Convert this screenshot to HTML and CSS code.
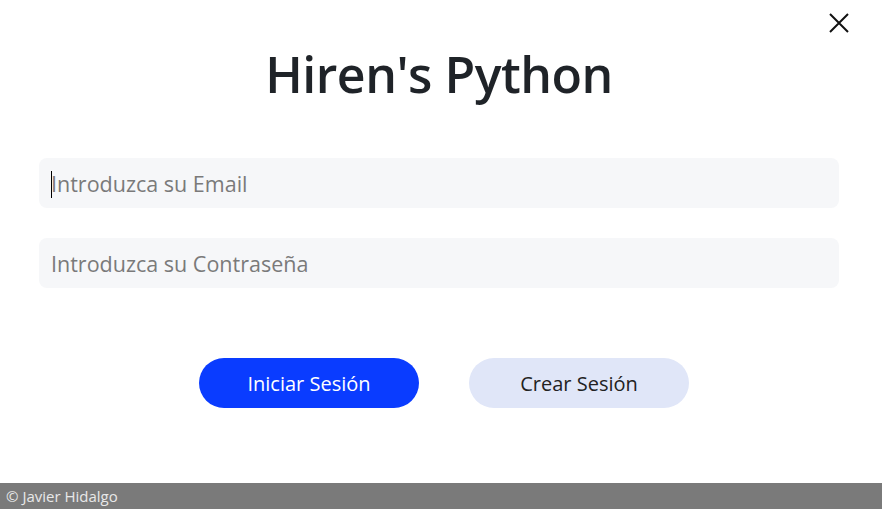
FILE: index.html
```html
<!DOCTYPE html>
<html lang="es">
<head>
<meta charset="utf-8">
<title>Hiren's Python</title>
<link rel="stylesheet" href="styles.css">
</head>
<body>
<div class="app">
  <main class="main">
    <button class="close" aria-label="Cerrar">
      <svg width="20" height="20" viewBox="0 0 20 20"><path d="M1 1 L19 19 M19 1 L1 19" stroke="#111" stroke-width="2" fill="none"/></svg>
    </button>
    <h1 class="title">Hiren's Python</h1>
    <div class="fields">
      <div class="field"><span class="caret"></span><span class="placeholder">Introduzca su Email</span></div>
      <div class="field"><span class="placeholder">Introduzca su Contraseña</span></div>
    </div>
    <div class="actions">
      <button class="btn btn-primary">Iniciar Sesión</button>
      <button class="btn btn-secondary">Crear Sesión</button>
    </div>
  </main>
  <footer class="footer">© Javier Hidalgo</footer>
</div>
</body>
</html>
```
FILE: styles.css
```css
* { box-sizing: border-box; }
html, body { margin: 0; padding: 0; }
body {
  width: 882px;
  height: 509px;
  background: #fff;
  font-family: "Open Sans", "Noto Sans", sans-serif;
  overflow: hidden;
}
.app {
  display: flex;
  flex-direction: column;
  height: 509px;
}
.main {
  position: relative;
  flex: 1;
  display: flex;
  flex-direction: column;
  align-items: center;
  padding: 42px 43px 0 39px;
}
.close {
  position: absolute;
  top: 13px;
  right: 33px;
  width: 20px;
  height: 20px;
  padding: 0;
  border: 0;
  background: none;
}
.close svg { display: block; }
.title {
  margin: 0;
  font-size: 50px;
  line-height: 64px;
  font-weight: 600;
  color: #1f2328;
  letter-spacing: -0.5px;
}
.fields {
  margin-top: 52px;
  width: 800px;
  display: flex;
  flex-direction: column;
  gap: 30px;
}
.field {
  height: 50px;
  background: #f6f7f9;
  border-radius: 8px;
  display: flex;
  align-items: center;
  padding-left: 12px;
  position: relative;
}
.caret {
  position: absolute;
  left: 12px;
  top: 13px;
  width: 1px;
  height: 27px;
  background: #000;
}
.placeholder {
  font-size: 21.5px;
  color: #7a7a7a;
}
.actions {
  margin-top: 70px;
  margin-left: 10px;
  display: flex;
  gap: 50px;
}
.btn {
  width: 220px;
  height: 50px;
  border: 0;
  border-radius: 25px;
  font-family: inherit;
  font-size: 20px;
}
.btn-primary { background: #0a3cff; color: #fff; }
.btn-secondary { background: #e0e6f8; color: #222; }
.footer {
  height: 26px;
  background: #7a7a7a;
  color: #e8e8e8;
  font-size: 15px;
  line-height: 26px;
  padding-left: 6px;
}
```
